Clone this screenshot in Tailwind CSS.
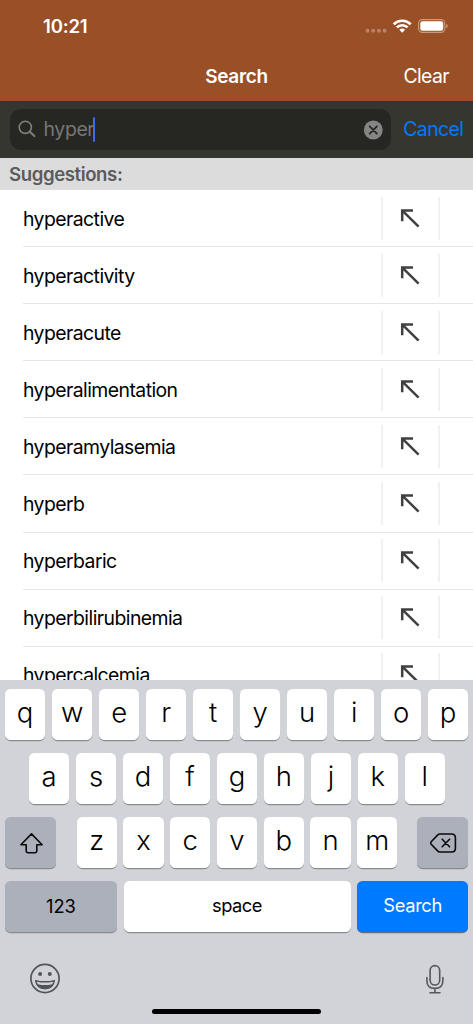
<!DOCTYPE html>
<html lang="en">
<head>
<meta charset="utf-8">
<title>Search</title>
<script src="https://cdn.jsdelivr.net/npm/@tailwindcss/browser@4"></script>
</head>
<body class="bg-white">
<div class="w-[473px] h-[1024px] overflow-hidden flex flex-col font-['Inter',sans-serif] text-black">
  <header class="h-[101px] shrink-0 bg-[#9a5027] text-white flex flex-col">
    <div class="h-[51px] flex items-center justify-between pl-[43px] pr-[25px] pt-[2px]">
      <span class="text-[18.5px] font-semibold tracking-[-0.15px]">10:21</span>
      <svg width="84" height="20" viewBox="0 0 84 20" fill="none">
        <g fill="#ba8267"><circle cx="3.5" cy="13.7" r="2"/><circle cx="9.2" cy="13.7" r="2"/><circle cx="14.9" cy="13.7" r="2"/><circle cx="20.6" cy="13.7" r="2"/></g>
        <g stroke="#fff" stroke-width="2.7"><path d="M29.7 7.2a12.2 12.2 0 0 1 17 0"/><path d="M32.8 10.4a7.8 7.8 0 0 1 10.8 0"/></g>
        <path d="M38.2 15.8l-2.9-3a4.2 4.2 0 0 1 5.8 0z" fill="#fff"/>
        <rect x="54.6" y="2.6" width="26.2" height="12.8" rx="3.8" stroke="#c99a83" stroke-width="1.1"/>
        <rect x="56.3" y="4.2" width="22.9" height="9.6" rx="2.3" fill="#fff"/>
        <path d="M82.2 7v4.2q1.6-.5 1.6-2.1t-1.6-2.1z" fill="#c99a83"/>
      </svg>
    </div>
    <div class="h-[50px] grid grid-cols-3 items-center px-[24px] pt-[2px]">
      <span></span>
      <h1 class="text-center text-[19px] font-semibold tracking-[-0.3px]">Search</h1>
      <span class="text-right text-[19.4px] tracking-[-0.6px]">Clear</span>
    </div>
  </header>

  <div class="h-[57px] shrink-0 bg-[#363631] flex items-center pl-[9.5px] pr-[9.5px] justify-between">
    <div class="w-[381px] h-[41px] rounded-[11px] bg-[#262622] flex items-center pl-[8px] pr-[8px]">
      <svg width="19" height="19" viewBox="0 0 19 19" fill="none" stroke="#7f7f7c" stroke-width="1.6" stroke-linecap="round"><circle cx="7.3" cy="7.3" r="6.1"/><path d="M11.8 11.8l4.6 4.3" stroke-width="2"/></svg>
      <span class="ml-[7px] text-[19.4px] tracking-[-0.35px] text-[#777774]">hyper</span>
      <i class="w-[2.5px] h-[25px] rounded-full bg-[#4169e8] -ml-[1.5px]"></i>
      <svg class="ml-auto" width="20" height="20" viewBox="0 0 20 20"><circle cx="10.3" cy="10" r="9.4" fill="#858585"/><path d="M6.7 6.4l7.2 7.2M13.9 6.4l-7.2 7.2" stroke="#262622" stroke-width="1.8" stroke-linecap="round"/></svg>
    </div>
    <span class="text-[19.4px] tracking-[-0.55px] text-[#007aff]">Cancel</span>
  </div>

  <div class="h-[32px] shrink-0 bg-[#dcdcdc] flex items-center pl-[9px] pt-[1px] text-[18.6px] font-semibold tracking-[-0.4px] text-[#5b5b5b]">Suggestions:</div>

  <ul id="list" class="h-[490px] shrink-0 overflow-hidden bg-white"></ul>

  <section class="flex-1 bg-[#d1d3d9] pt-[9px] flex flex-col">
    <div id="r1" class="h-[51px] mb-[13px] pl-[5px] pr-[4.7px] flex justify-between"></div>
    <div id="r2" class="h-[51px] mb-[13px] pl-[29px] pr-[28px] flex justify-between"></div>
    <div class="h-[51px] mb-[13px] px-[5px] flex justify-between">
      <div class="w-[51px] rounded-[5.5px] bg-[#abb0bb] shadow-[0_1.2px_0_#898b90] flex items-center justify-center">
        <svg width="24" height="22" viewBox="0 0 24 22" fill="none" stroke="#0a0a0a" stroke-width="1.6" stroke-linejoin="round"><path d="M12.5 1.9L23.1 12.7H17.8V19.1Q17.8 20.7 16.2 20.7H8.8Q7.2 20.7 7.2 19.1V12.7H1.9Z"/></svg>
      </div>
      <div id="r3" class="w-[321px] ml-[1px] flex justify-between"></div>
      <div class="w-[51px] rounded-[5.5px] bg-[#abb0bb] shadow-[0_1.2px_0_#898b90] flex items-center justify-center">
        <svg width="28" height="22" viewBox="0 0 28 22" fill="none" stroke="#0a0a0a" stroke-width="1.6" stroke-linejoin="round" stroke-linecap="round"><path d="M11 2H22.6Q26.4 2 26.4 5.8V16.2Q26.4 20 22.6 20H11Q9.6 20 8.6 18.9L2.2 12.2Q1.2 11 2.2 9.8L8.6 3.1Q9.6 2 11 2Z"/><path d="M13.2 7.2L20.6 14.8M20.6 7.2L13.2 14.8"/></svg>
      </div>
    </div>
    <div class="h-[51px] px-[5px] flex justify-between text-[18.3px]">
      <div class="w-[111.7px] rounded-[5.5px] bg-[#abb0bb] shadow-[0_1.2px_0_#898b90] flex items-center justify-center tracking-[-0.1px]">123</div>
      <div class="w-[227px] rounded-[5.5px] bg-white shadow-[0_1.2px_0_#898b90] flex items-center justify-center pb-[2px] tracking-[-0.5px]">space</div>
      <div class="w-[110.7px] rounded-[5.5px] bg-[#007aff] shadow-[0_1.2px_0_#5f7287] flex items-center justify-center pb-[2px] text-white tracking-[-0.35px]">Search</div>
    </div>
    <div class="mt-[30px] h-[34px] pl-[29px] pr-[28.5px] flex items-center justify-between">
      <svg width="32" height="32" viewBox="0 0 32 32" fill="none"><circle cx="16" cy="15.5" r="14.1" stroke="#50555c" stroke-width="1.7"/><circle cx="11.1" cy="10.9" r="2" fill="#50555c"/><circle cx="20.8" cy="10.9" r="2" fill="#50555c"/><path d="M6.5 17.5Q16 19.9 25.5 17.5Q24.4 25.8 16 25.8T6.5 17.5Z" fill="#50555c" stroke="#50555c" stroke-width="1.2" stroke-linejoin="round"/><path d="M7.8 18.7Q16 20.5 24.2 18.7Q23.9 20.1 23 21.2Q16 23 9 21.2Q8.1 20.1 7.8 18.7Z" fill="#d1d3d9"/></svg>
      <svg width="20" height="32" viewBox="0 0 20 32" fill="none" stroke="#55595f" stroke-width="1.6" stroke-linecap="round"><rect x="5.1" y="2.6" width="9.6" height="19.4" rx="4.8"/><path d="M1.9 14.6V17.4Q1.9 25.4 9.9 25.4T17.9 17.4V14.6M9.9 25.4V29.4M5 29.8H15"/></svg>
    </div>
    <div class="mt-[12.5px] mx-auto w-[169px] h-[5.7px] shrink-0 rounded-full bg-black"></div>
  </section>
</div>
<script>
const words = ['hyperactive', 'hyperactivity', 'hyperacute', 'hyperalimentation', 'hyperamylasemia', 'hyperb', 'hyperbaric', 'hyperbilirubinemia', 'hypercalcemia'];
document.getElementById('list').innerHTML = words.map(w => `
<li class="h-[57.1px] ml-[23px] flex items-center border-b border-[#e6e6e6]">
  <span class="w-[358px] pt-[2.5px] text-[19.4px] tracking-[-0.56px]">${w}</span>
  <span class="w-[59px] h-[43px] border-x-2 border-[#f1f1f1] flex items-center justify-center">
    <svg class="mr-[2px] mb-[1px]" width="20" height="20" viewBox="0 0 20 20" fill="none" stroke="#404042" stroke-width="2.5"><path d="M2.2 13.2V2.4H13M2.6 2.8L18.6 18.6"/></svg>
  </span>
</li>`).join('');
const fill = (id, keys) => document.getElementById(id).innerHTML = [...keys].map(k =>
  `<div class="w-[40.3px] h-[51px] rounded-[5.5px] bg-white shadow-[0_1.2px_0_#898b90] text-center text-[27.5px] leading-[47px] font-[340]">${k}</div>`).join('');
fill('r1', 'qwertyuiop');
fill('r2', 'asdfghjkl');
fill('r3', 'zxcvbnm');
</script>
</body>
</html>
